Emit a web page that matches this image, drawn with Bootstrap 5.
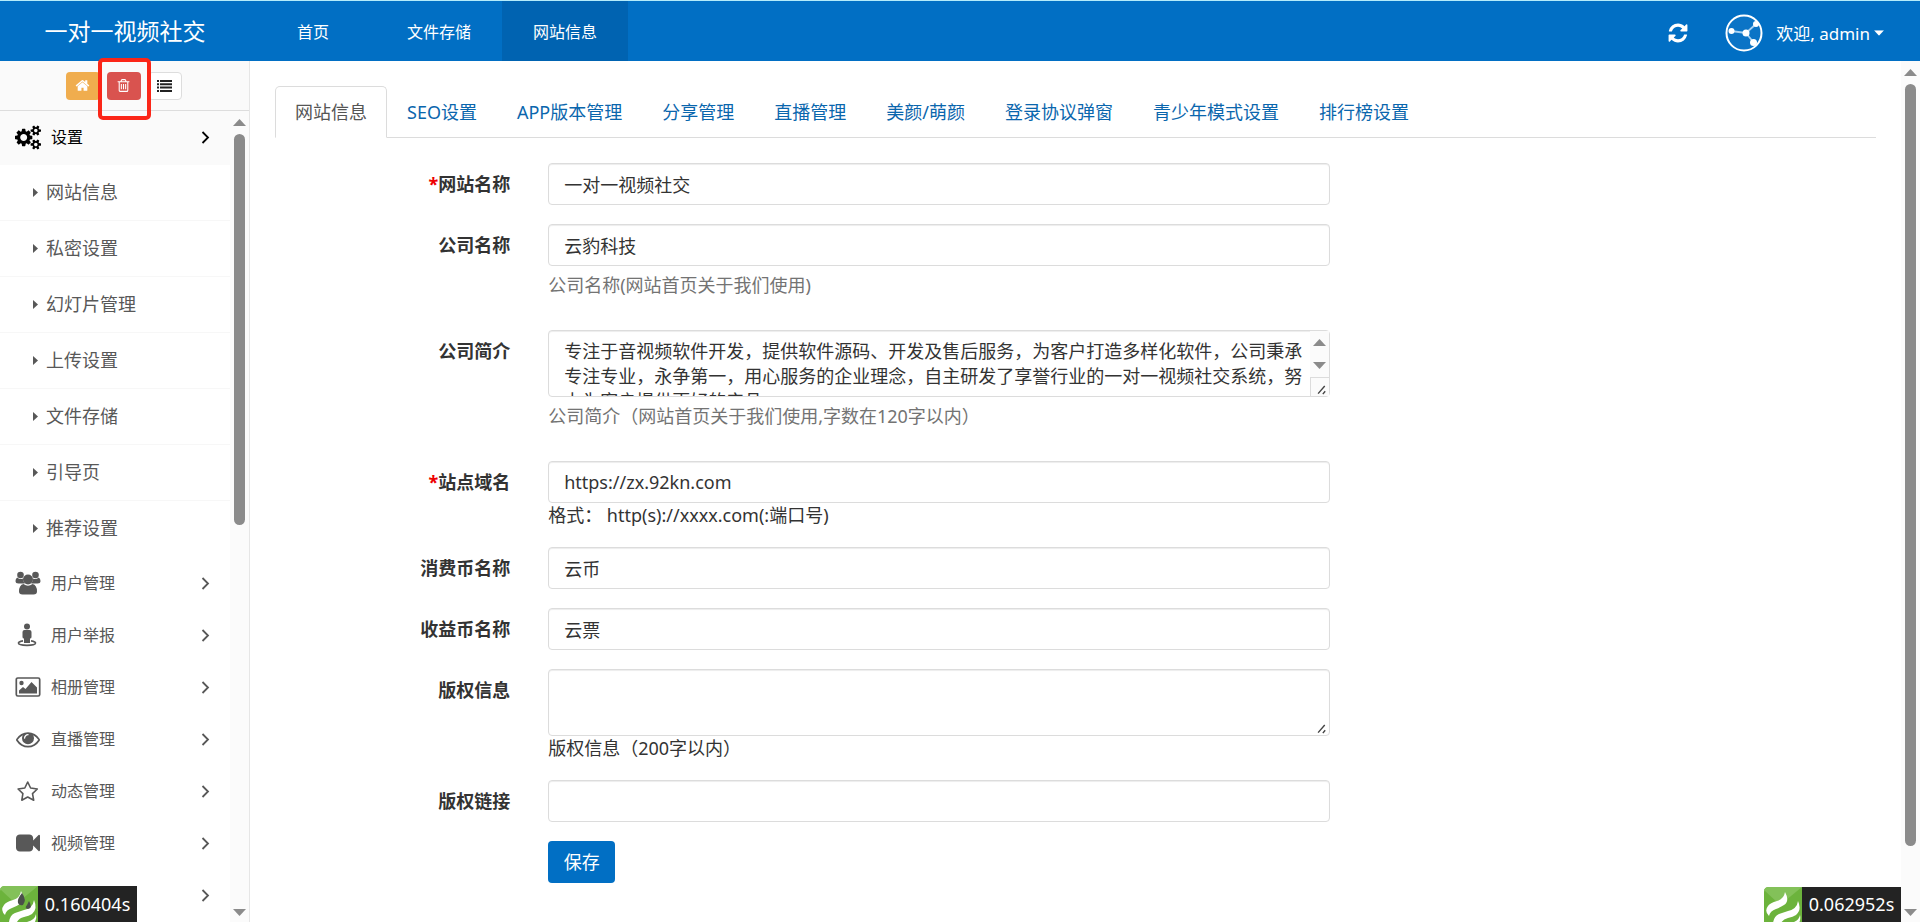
<!DOCTYPE html>
<html lang="zh-CN">
<head>
<meta charset="utf-8">
<meta name="viewport" content="width=device-width, initial-scale=1">
<title>网站信息</title>
<link href="https://cdn.jsdelivr.net/npm/bootstrap@5.3.0/dist/css/bootstrap.min.css" rel="stylesheet">
<style>
:root { --brand: #016fc4; --ink: #333; --muted: #585858; --line: #dcdcdc; }
body { font-family: "Noto Sans", "Noto Sans CJK SC", sans-serif; font-size: 18px; line-height: 25px; color: var(--ink); background: #fff; }
svg { display: block; flex: none; }

/* top bar */
.topbar { height: 61px; background: var(--brand); border-top: 1px solid #b4ecfb; }
.brand-name { width: 250px; font-size: 23px; line-height: 30px; color: #fff; }
.topbar .nav-link { width: 126px; font-size: 16px; color: #fff; padding: 2px 0 0; border-radius: 0; }
.topbar .nav-link.active { background: #0063b1; }
.top-tools { padding-right: 36px; gap: 36px; }
.icon-btn { border: 0; background: none; color: #fff; padding: 0; }
.user-btn { font-size: 17px; gap: 13px; }

/* sidebar */
.page-body { min-height: 0; }
.side { width: 250px; border-right: 1px solid #e6e6e6; }
.shortcuts { height: 50px; background: #fafafa; border-bottom: 1px solid #ddd; gap: 7px; position: relative; padding-right: 2px; }
.shortcuts .btn { width: 34px; height: 28px; padding: 0; border-radius: 4px; }
.btn-home { background: #f0ad4e; color: #fff; }
.btn-trash { background: #d9534f; color: #fff; }
.btn-menu { background: #fff; border: 1px solid #ddd; color: #222; }
.mark-box { position: absolute; left: 98px; top: -3px; width: 53px; height: 62px; border: 4px solid #fb2618; border-radius: 5px; z-index: 3; pointer-events: none; }
.menu-item { height: 52px; padding: 0 20px 0 15px; font-size: 16px; color: var(--muted); text-decoration: none; flex: none; }
.menu-item.open { height: 54px; background: #fafafa; color: #000; padding-bottom: 2px; }
.menu-item .label-text { margin-left: 10px; }
.sub-item { height: 56px; padding: 0 0 1px 33px; gap: 8px; color: var(--muted); text-decoration: none; border-bottom: 1px solid #f7f7f7; flex: none; }
.sub-item:last-child { border-bottom-color: transparent; }
.scroll-track { width: 19px; background: #fbfbfb; padding: 8px 0 6px; gap: 8px; color: #8b8b8b; flex: none; }
.thumb { width: 11px; border-radius: 6px; background: #8b8b8b; }
.rest { flex: 1; }

/* content */
.content-pad { padding: 25px; }
.nav-tabs { border-bottom: 1px solid var(--line); }
.nav-tabs .nav-link { padding: 13px 19px; line-height: 24px; color: #0a66ad; border-radius: 5px 5px 0 0; }
.nav-tabs .nav-link.active { color: #555; border-color: var(--line) var(--line) #fff; }
.site-form { padding-top: 25px; }
.form-row { --bs-gutter-x: 38px; margin-bottom: 19px; }
.form-row label { font-weight: 700; text-align: right; padding-top: 9px; }
.form-row .form-control { height: 42px; font-size: 18px; line-height: 25px; padding: 7px 15px; border: 1px solid var(--line); border-radius: 4px; color: var(--ink); box-shadow: inset 0 1px 1px rgba(0,0,0,.075); }
.form-row textarea.form-control { height: 67px; resize: none; overflow: hidden; padding-top: 8px; display: block; }
.help { color: #737373; margin: 7px 0 13px; }
.req { color: #e00; }
.btn-save { width: 67px; height: 42px; background: var(--brand); color: #fff; font-size: 18px; padding: 0; border-radius: 4px; }
.box-scroll { position: absolute; right: 1px; top: 1px; bottom: 1px; width: 19px; background: #fbfbfb; color: #8b8b8b; padding-top: 8px; }
.grip-cell { border: 1px solid var(--line); border-width: 1px 0 0 1px; width: 19px; height: 19px; }
.grip-free { position: absolute; right: 1px; bottom: 1px; }

/* timing badges */
.trace { position: absolute; bottom: 0; z-index: 5; height: 36px; }
.trace span { width: 99px; background: #232323; color: #fff; font-size: 18px; }
.trace-right { right: 19px; height: 35px; }
</style>
</head>
<body class="vh-100 d-flex flex-column overflow-hidden position-relative">
<svg width="0" height="0" class="position-absolute">
  <symbol id="chev" viewBox="0 0 9 13"><path d="M1.500 1l5.500 5.500-5.500 5.500" fill="none" stroke="currentColor" stroke-width="1.800"/></symbol>
  <symbol id="tri-r" viewBox="0 0 5 9"><path d="M0 0l5 4.500-5 4.500z" fill="currentColor"/></symbol>
  <symbol id="tri-u" viewBox="0 0 13 7"><path d="M0 7L6.500 0 13 7z" fill="currentColor"/></symbol>
  <symbol id="tri-d" viewBox="0 0 13 7"><path d="M0 0h13L6.500 7z" fill="currentColor"/></symbol>
  <symbol id="grip" viewBox="0 0 19 18"><path d="M7.500 16l7-8M12.500 16.500l2.500-3" stroke="#444" stroke-width="1.500" fill="none"/></symbol>
  <symbol id="flame" viewBox="0 0 38 36">
    <path d="M5 0h33v36H0V5q0-5 5-5z" fill="#6cb33c"/><path d="M5 0h33L16 18 0 3q1-3 5-3z" fill="#83c159"/>
    <path d="M21 5q5 9-1 13-3 2-8 4-6 2-7 7-5-5-1-10 2-3 9-5 7-2 8-9z" fill="#fff"/>
    <path d="M34 14q4 9-2 14-3 2-8 3-5 1-7 5h-8q1-7 6-9 3-1 9-3 9-2 10-10z" fill="#fff"/>
    <path d="M36 28q1 4-1 8h-8q8-2 9-8z" fill="#fff"/>
  </symbol>
</svg>

<header class="topbar d-flex flex-shrink-0">
  <div class="brand-name d-flex align-items-center justify-content-center">一对一视频社交</div>
  <nav class="nav">
    <a class="nav-link d-flex align-items-center justify-content-center" href="#">首页</a>
    <a class="nav-link d-flex align-items-center justify-content-center" href="#">文件存储</a>
    <a class="nav-link active d-flex align-items-center justify-content-center" href="#">网站信息</a>
  </nav>
  <div class="top-tools ms-auto d-flex align-items-center pt-1">
    <button class="icon-btn" type="button" aria-label="刷新">
      <svg width="22" height="22" viewBox="0 0 1792 1792" fill="currentColor"><path d="M1639 1056q0 5-1 7-64 268-268 434.500t-478 166.500q-146 0-282.500-55t-243.500-157l-129 129q-19 19-45 19t-45-19-19-45v-448q0-26 19-45t45-19h448q26 0 45 19t19 45-19 45l-137 137q71 66 161 102t187 36q134 0 250-65t186-179q11-17 53-117 8-23 30-23h192q13 0 22.500 9.500t9.500 22.500zm25-800v448q0 26-19 45t-45 19h-448q-26 0-45-19t-19-45 19-45l138-138q-148-137-349-137-134 0-250 65t-186 179q-11 17-53 117-8 23-30 23h-199q-13 0-22.500-9.500t-9.500-22.500v-7q65-268 270-434.500t480-166.500q146 0 284 55.500t245 156.500l130-129q19-19 45-19t45 19 19 45z"/></svg>
    </button>
    <button class="icon-btn user-btn d-flex align-items-center" type="button">
      <svg width="38" height="38" viewBox="0 0 38 38"><circle cx="19" cy="19" r="17.500" fill="#0b74c6" stroke="#fff" stroke-width="2"/><path d="M6 17l15 2 10-9M21 19l8 10" stroke="#a9d2f2" stroke-width="1.800" fill="none"/><g fill="#fff"><circle cx="6.500" cy="17" r="3"/><circle cx="21" cy="19" r="3.500"/><circle cx="31" cy="10" r="3"/><circle cx="28.500" cy="28.500" r="3.500"/></g></svg>
      <span class="d-flex align-items-center gap-1">欢迎, admin<svg width="10" height="6" viewBox="0 0 13 7"><use href="#tri-d"/></svg></span>
    </button>
  </div>
</header>

<div class="page-body d-flex flex-grow-1">
  <aside class="side d-flex flex-column flex-shrink-0">
    <div class="shortcuts d-flex align-items-center justify-content-center flex-shrink-0">
      <button class="btn btn-home d-flex align-items-center justify-content-center" type="button" aria-label="首页"><svg width="15" height="15" viewBox="0 0 1792 1792" fill="currentColor"><path d="M1472 992v480q0 26-19 45t-45 19h-384v-384h-256v384h-384q-26 0-45-19t-19-45v-480q0-1 .5-3t.5-3l575-474 575 474q1 2 1 6zm223-69l-62 74q-8 9-21 11h-3q-13 0-21-7l-692-577-692 577q-12 8-24 7-13-2-21-11l-62-74q-8-10-7-23.500t11-21.500l719-599q32-26 76-26t76 26l244 204v-195q0-14 9-23t23-9h192q14 0 23 9t9 23v408l219 182q10 8 11 21.500t-7 23.500z"/></svg></button>
      <button class="btn btn-trash d-flex align-items-center justify-content-center" type="button" aria-label="清除缓存"><svg width="15" height="15" viewBox="0 0 1792 1792" fill="currentColor"><path d="M704 736v576q0 14-9 23t-23 9h-64q-14 0-23-9t-9-23v-576q0-14 9-23t23-9h64q14 0 23 9t9 23zm256 0v576q0 14-9 23t-23 9h-64q-14 0-23-9t-9-23v-576q0-14 9-23t23-9h64q14 0 23 9t9 23zm256 0v576q0 14-9 23t-23 9h-64q-14 0-23-9t-9-23v-576q0-14 9-23t23-9h64q14 0 23 9t9 23zm128 724v-948h-896v948q0 22 7 40.500t14.500 27 10.500 8.500h832q3 0 10.500-8.500t14.500-27 7-40.500zm-672-1076h448l-48-117q-7-9-17-11h-317q-10 2-17 11zm928 32v64q0 14-9 23t-23 9h-96v948q0 83-47 143.500t-113 60.500h-832q-66 0-113-58.500t-47-141.500v-952h-96q-14 0-23-9t-9-23v-64q0-14 9-23t23-9h309l70-167q15-37 54-63t79-26h320q40 0 79 26t54 63l70 167h309q14 0 23 9t9 23z"/></svg></button>
      <button class="btn btn-menu d-flex align-items-center justify-content-center" type="button" aria-label="菜单"><svg width="15" height="12" viewBox="0 0 15 12" fill="currentColor"><path d="M0 0h2v2H0zM3 0h12v2H3zM0 3.300h2v2H0zM3 3.300h12v2H3zM0 6.600h2v2H0zM3 6.600h12v2H3zM0 10h2v2H0zM3 10h12v2H3z"/></svg></button>
      <div class="mark-box"></div>
    </div>
    <div class="d-flex flex-grow-1 overflow-hidden">
      <nav class="d-flex flex-column flex-grow-1 overflow-hidden">
        <a class="menu-item open d-flex align-items-center" href="#">
          <svg width="26" height="25" viewBox="0 0 1920 1792" fill="currentColor"><path d="M896 896q0-106-75-181t-181-75-181 75-75 181 75 181 181 75 181-75 75-181zm768 512q0-52-38-90t-90-38-90 38-38 90q0 53 37.500 90.500t90.500 37.500 90.500-37.500 37.500-90.500zm0-1024q0-52-38-90t-90-38-90 38-38 90q0 53 37.500 90.500t90.500 37.500 90.500-37.500 37.500-90.500zm-384 421v185q0 10-7 19.500t-16 10.500l-155 24q-11 35-32 76 34 48 90 115 7 11 7 20 0 12-7 19-23 30-82.500 89.500t-78.500 59.500q-11 0-21-7l-115-90q-37 19-77 31-11 108-23 155-7 24-30 24h-186q-11 0-20-7.500t-10-17.500l-23-153q-34-10-75-31l-118 89q-7 7-20 7-11 0-21-8-144-133-144-160 0-9 7-19 10-14 41-53t47-61q-23-44-35-82l-152-24q-10-1-17-9.500t-7-19.500v-185q0-10 7-19.500t16-10.500l155-24q11-35 32-76-34-48-90-115-7-11-7-20 0-12 7-20 22-30 82-89t79-59q11 0 21 7l115 90q34-18 77-32 11-108 23-154 7-24 30-24h186q11 0 20 7.500t10 17.500l23 153q34 10 75 31l118-89q8-7 20-7 11 0 21 8 144 133 144 160 0 8-7 19-12 16-42 54t-45 60q23 48 34 82l152 23q10 2 17 10.500t7 19.500zm640 533v140q0 16-149 31-12 27-30 52 51 113 51 138 0 4-4 7-122 71-124 71-8 0-46-47t-52-68q-20 2-30 2t-30-2q-14 21-52 68t-46 47q-2 0-124-71-4-3-4-7 0-25 51-138-18-25-30-52-149-15-149-31v-140q0-16 149-31 13-29 30-52-51-113-51-138 0-4 4-7 4-2 35-20t59-34 30-16q8 0 46 46.500t52 67.500q20-2 30-2t30 2q51-71 92-112l6-2q4 0 124 70 4 3 4 7 0 25-51 138 17 23 30 52 149 15 149 31zm0-1024v140q0 16-149 31-12 27-30 52 51 113 51 138 0 4-4 7-122 71-124 71-8 0-46-47t-52-68q-20 2-30 2t-30-2q-14 21-52 68t-46 47q-2 0-124-71-4-3-4-7 0-25 51-138-18-25-30-52-149-15-149-31v-140q0-16 149-31 13-29 30-52-51-113-51-138 0-4 4-7 4-2 35-20t59-34 30-16q8 0 46 46.500t52 67.500q20-2 30-2t30 2q51-71 92-112l6-2q4 0 124 70 4 3 4 7 0 25-51 138 17 23 30 52 149 15 149 31z"/></svg>
          <span class="label-text">设置</span><svg class="ms-auto" width="9" height="13"><use href="#chev"/></svg></a>
        <div class="d-flex flex-column flex-shrink-0">
          <a class="sub-item d-flex align-items-center" href="#"><svg width="5" height="9"><use href="#tri-r"/></svg>网站信息</a>
          <a class="sub-item d-flex align-items-center" href="#"><svg width="5" height="9"><use href="#tri-r"/></svg>私密设置</a>
          <a class="sub-item d-flex align-items-center" href="#"><svg width="5" height="9"><use href="#tri-r"/></svg>幻灯片管理</a>
          <a class="sub-item d-flex align-items-center" href="#"><svg width="5" height="9"><use href="#tri-r"/></svg>上传设置</a>
          <a class="sub-item d-flex align-items-center" href="#"><svg width="5" height="9"><use href="#tri-r"/></svg>文件存储</a>
          <a class="sub-item d-flex align-items-center" href="#"><svg width="5" height="9"><use href="#tri-r"/></svg>引导页</a>
          <a class="sub-item d-flex align-items-center" href="#"><svg width="5" height="9"><use href="#tri-r"/></svg>推荐设置</a>
        </div>
        <a class="menu-item d-flex align-items-center" href="#">
          <svg width="26" height="24" viewBox="0 0 26 24" fill="currentColor"><circle cx="5.500" cy="4" r="3.300"/><circle cx="20.500" cy="4" r="3.300"/><path d="M2.200 6.500q3 2.500 5.500 1 .3 3 2 5H3.500Q.5 12.500.5 10q0-2.500 1.700-3.500zM23.800 6.500q-3 2.500-5.500 1-.3 3-2 5h6.200q3 0 3-2.500t-1.700-3.500z"/><circle cx="13" cy="8.500" r="5"/><path d="M8.500 13q4.500 3.500 9 0 4.500 1 4.500 7.500 0 3-3.500 3h-11Q4 23.500 4 20.500 4 14 8.500 13z"/></svg>
          <span class="label-text">用户管理</span><svg class="ms-auto" width="9" height="13"><use href="#chev"/></svg></a>
        <a class="menu-item d-flex align-items-center" href="#">
          <svg width="26" height="24" viewBox="0 0 26 24" fill="currentColor"><circle cx="12" cy="3.500" r="3"/><path d="M9.500 7h5q2 0 2 2v5q0 1.500-1.500 1.500V20H9v-4.500q-1.500 0-1.500-1.500V9q0-2 2-2z"/><path d="M8 17.800q-4.500.7-4.500 2.200 0 2.300 8.500 2.300t8.500-2.300q0-1.500-4.500-2.200" fill="none" stroke="currentColor" stroke-width="1.700"/></svg>
          <span class="label-text">用户举报</span><svg class="ms-auto" width="9" height="13"><use href="#chev"/></svg></a>
        <a class="menu-item d-flex align-items-center" href="#">
          <svg width="26" height="22" viewBox="0 0 26 22" fill="currentColor"><rect x="1.300" y="2" width="23.400" height="18" rx="1.500" fill="none" stroke="currentColor" stroke-width="1.700"/><circle cx="6.500" cy="7" r="2.200"/><path d="M4 17.500v-3l4-3.500 2.500 2L16.500 6 22 11.500v6z"/></svg>
          <span class="label-text">相册管理</span><svg class="ms-auto" width="9" height="13"><use href="#chev"/></svg></a>
        <a class="menu-item d-flex align-items-center" href="#">
          <svg width="26" height="24" viewBox="0 0 1792 1792" fill="currentColor"><path d="M1664 960q-152-236-381-353 61 104 61 225 0 185-131.500 316.500t-316.500 131.500-316.500-131.500-131.500-316.500q0-121 61-225-229 117-381 353 133 205 333.500 326.500t434.500 121.500 434.500-121.500 333.500-326.500zm-720-384q0-20-14-34t-34-14q-125 0-214.500 89.500t-89.500 214.500q0 20 14 34t34 14 34-14 14-34q0-86 61-147t147-61q20 0 34-14t14-34zm848 384q0 34-20 69-140 230-376.500 368.500t-499.500 138.500-499.500-139-376.500-368q-20-35-20-69t20-69q140-229 376.500-368t499.500-139 499.500 139 376.500 368q20 35 20 69z"/></svg>
          <span class="label-text">直播管理</span><svg class="ms-auto" width="9" height="13"><use href="#chev"/></svg></a>
        <a class="menu-item d-flex align-items-center" href="#">
          <svg width="26" height="24" viewBox="0 0 26 24"><path d="M12.700 3l2.900 6 6.700 1-4.800 4.600 1.200 6.600-6-3.200-5.900 3.200 1.100-6.600L3.100 10l6.700-1z" fill="none" stroke="currentColor" stroke-width="1.600" stroke-linejoin="round"/></svg>
          <span class="label-text">动态管理</span><svg class="ms-auto" width="9" height="13"><use href="#chev"/></svg></a>
        <a class="menu-item d-flex align-items-center" href="#">
          <svg width="26" height="24" viewBox="-70 0 1932 1792" fill="currentColor"><path d="M1792 352v1088q0 42-39 59-13 5-25 5-27 0-45-19l-403-403v166q0 119-84.500 203.500t-203.500 84.500h-704q-119 0-203.500-84.500t-84.500-203.500v-704q0-119 84.500-203.500t203.500-84.500h704q119 0 203.500 84.500t84.500 203.500v165l403-402q18-19 45-19 12 0 25 5 39 17 39 59z"/></svg>
          <span class="label-text">视频管理</span><svg class="ms-auto" width="9" height="13"><use href="#chev"/></svg></a>
        <a class="menu-item d-flex align-items-center" href="#" aria-label="更多">
          <svg class="ms-auto" width="9" height="13"><use href="#chev"/></svg></a>
      </nav>
      <div class="scroll-track d-flex flex-column align-items-center">
        <svg width="13" height="7"><use href="#tri-u"/></svg>
        <div class="thumb" style="height:49%"></div><div class="rest"></div>
        <svg width="13" height="7"><use href="#tri-d"/></svg>
      </div>
    </div>
  </aside>

  <main class="flex-grow-1 content-pad">
    <ul class="nav nav-tabs">
      <li class="nav-item"><a class="nav-link active" href="#">网站信息</a></li>
      <li class="nav-item"><a class="nav-link" href="#">SEO设置</a></li>
      <li class="nav-item"><a class="nav-link" href="#">APP版本管理</a></li>
      <li class="nav-item"><a class="nav-link" href="#">分享管理</a></li>
      <li class="nav-item"><a class="nav-link" href="#">直播管理</a></li>
      <li class="nav-item"><a class="nav-link" href="#">美颜/萌颜</a></li>
      <li class="nav-item"><a class="nav-link" href="#">登录协议弹窗</a></li>
      <li class="nav-item"><a class="nav-link" href="#">青少年模式设置</a></li>
      <li class="nav-item"><a class="nav-link" href="#">排行榜设置</a></li>
    </ul>
    <form class="site-form">
      <div class="row form-row">
        <label class="col-2" for="f1"><span class="req">*</span>网站名称</label>
        <div class="col-6"><input class="form-control" id="f1" type="text" value="一对一视频社交"></div>
      </div>
      <div class="row form-row">
        <label class="col-2" for="f2">公司名称</label>
        <div class="col-6"><input class="form-control" id="f2" type="text" value="云豹科技"><p class="help">公司名称(网站首页关于我们使用)</p></div>
      </div>
      <div class="row form-row">
        <label class="col-2" for="f3">公司简介</label>
        <div class="col-6">
          <div class="position-relative">
            <textarea class="form-control" id="f3">专注于音视频软件开发，提供软件源码、开发及售后服务，为客户打造多样化软件，公司秉承专注专业，永争第一，用心服务的企业理念，自主研发了享誉行业的一对一视频社交系统，努力为客户提供更好的产品。</textarea>
            <div class="box-scroll d-flex flex-column align-items-center">
              <svg width="13" height="7"><use href="#tri-u"/></svg>
              <svg class="mt-3" width="13" height="7"><use href="#tri-d"/></svg>
              <div class="grip-cell mt-auto"><svg width="18" height="18"><use href="#grip"/></svg></div>
            </div>
          </div>
          <p class="help">公司简介（网站首页关于我们使用,字数在120字以内）</p>
        </div>
      </div>
      <div class="row form-row">
        <label class="col-2" for="f4"><span class="req">*</span>站点域名</label>
        <div class="col-6"><input class="form-control" id="f4" type="text" value="https://zx.92kn.com"><div>格式：&nbsp;http(s)://xxxx.com(:端口号)</div></div>
      </div>
      <div class="row form-row">
        <label class="col-2" for="f5">消费币名称</label>
        <div class="col-6"><input class="form-control" id="f5" type="text" value="云币"></div>
      </div>
      <div class="row form-row">
        <label class="col-2" for="f6">收益币名称</label>
        <div class="col-6"><input class="form-control" id="f6" type="text" value="云票"></div>
      </div>
      <div class="row form-row">
        <label class="col-2" for="f7">版权信息</label>
        <div class="col-6">
          <div class="position-relative"><textarea class="form-control" id="f7"></textarea><svg class="grip-free" width="18" height="18"><use href="#grip"/></svg></div>
          <div>版权信息（200字以内）</div>
        </div>
      </div>
      <div class="row form-row">
        <label class="col-2" for="f8">版权链接</label>
        <div class="col-6"><input class="form-control" id="f8" type="text"></div>
      </div>
      <div class="row form-row">
        <div class="col-6 offset-2"><button class="btn btn-save" type="submit">保存</button></div>
      </div>
    </form>
  </main>
  <div class="scroll-track d-flex flex-column align-items-center">
    <svg width="13" height="7"><use href="#tri-u"/></svg>
    <div class="thumb" style="height:90%"></div><div class="rest"></div>
    <svg width="13" height="7"><use href="#tri-d"/></svg>
  </div>
</div>

<div class="trace start-0 d-flex align-items-stretch">
  <svg width="38" height="36" viewBox="0 0 38 36"><use href="#flame"/><path d="M22 7q5 7 1 12-4 1-5-2-1-4 4-10zM29 15q4 7-1 8-4-1-1-4z" fill="#4a4f4a"/></svg>
  <span class="d-flex align-items-center justify-content-center">0.160404s</span>
</div>
<div class="trace trace-right d-flex align-items-stretch">
  <svg width="38" height="36" viewBox="0 0 38 36"><use href="#flame"/></svg>
  <span class="d-flex align-items-center justify-content-center">0.062952s</span>
</div>
<script src="https://cdn.jsdelivr.net/npm/bootstrap@5.3.0/dist/js/bootstrap.bundle.min.js"></script>
</body>
</html>
